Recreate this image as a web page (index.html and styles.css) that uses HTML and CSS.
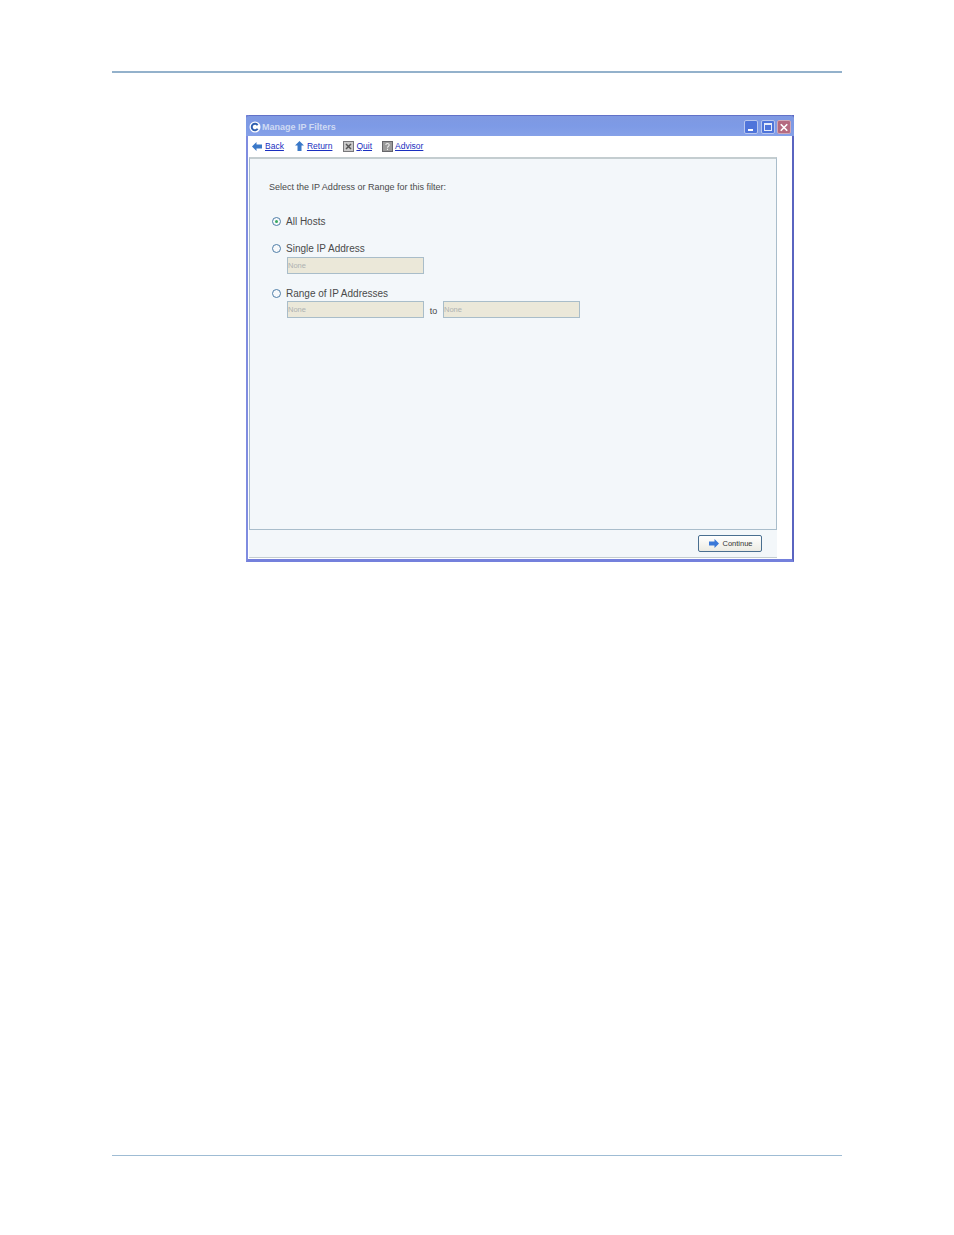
FILE: index.html
```html
<!DOCTYPE html>
<html lang="en">
<head>
  <meta charset="UTF-8">
  <title>Manage IP Filters</title>
  <link rel="stylesheet" href="styles.css">
</head>
<body>
  <div class="page">
    <div class="top-rule"></div>

    <div class="window">
      <div class="title-bar">
        <svg class="app-icon" width="12" height="12" viewBox="0 0 12 12">
          <circle cx="6" cy="6" r="5.5" fill="#fff"/>
          <path d="M8.6 4.2A3.2 3.2 0 1 0 8.6 7.8" fill="none" stroke="#2f5fb0" stroke-width="2"/>
        </svg>
        <span class="title-text">Manage IP Filters</span>
        <div class="window-buttons">
          <div class="win-btn win-min"><span class="min-mark"></span></div>
          <div class="win-btn win-max"><span class="max-mark"></span></div>
          <div class="win-btn win-close">
            <svg width="13" height="13" viewBox="0 0 13 13">
              <path d="M3 3L10 10M10 3L3 10" stroke="#fff" stroke-width="1.8"/>
            </svg>
          </div>
        </div>
      </div>

      <div class="toolbar">
        <div class="tool tool-back">
          <svg width="10" height="9" viewBox="0 0 10 9"><path d="M0 4.5L4.5 0V2.5H10V6.5H4.5V9Z" fill="#3a78c8"/></svg>
          <a href="#">Back</a>
        </div>
        <div class="tool tool-return">
          <svg width="9" height="10" viewBox="0 0 9 10"><path d="M4.5 0L9 4.5H6.5V10H2.5V4.5H0Z" fill="#3a78c8"/></svg>
          <a href="#">Return</a>
        </div>
        <div class="tool tool-quit">
          <svg width="11" height="11" viewBox="0 0 11 11">
            <rect width="11" height="11" fill="#77777a"/>
            <rect x="1" y="1" width="9" height="9" fill="#c9c9c9"/>
            <path d="M3 3L8 8M8 3L3 8" stroke="#555" stroke-width="1.5"/>
          </svg>
          <a href="#">Quit</a>
        </div>
        <div class="tool tool-advisor">
          <svg width="11" height="11" viewBox="0 0 11 11">
            <rect width="11" height="11" fill="#66666a"/>
            <rect x="1" y="1" width="9" height="9" fill="#9a9a9a"/>
            <path d="M3.8 4C3.8 2 7.2 2 7.2 4C7.2 5.3 5.5 5.3 5.5 6.8M5.5 7.8V9" fill="none" stroke="#eee" stroke-width="1.1"/>
          </svg>
          <a href="#">Advisor</a>
        </div>
      </div>

      <div class="panel">
        <p class="prompt">Select the IP Address or Range for this filter:</p>

        <div class="option option-all">
          <span class="radio radio-on"></span>
          <span class="option-label">All Hosts</span>
        </div>

        <div class="option option-single">
          <span class="radio"></span>
          <span class="option-label">Single IP Address</span>
        </div>
        <div class="fields">
          <div class="field">None</div>
        </div>

        <div class="option option-range">
          <span class="radio"></span>
          <span class="option-label">Range of IP Addresses</span>
        </div>
        <div class="fields fields-range">
          <div class="field">None</div>
          <span class="to">to</span>
          <div class="field">None</div>
        </div>
      </div>

      <div class="footer">
        <button class="continue-btn" type="button">
          <svg width="10" height="9" viewBox="0 0 10 9"><path d="M10 4.5L5.5 0V2.5H0V6.5H5.5V9Z" fill="#3a78d8"/></svg>
          Continue
        </button>
      </div>
    </div>

    <div class="bottom-rule"></div>
  </div>
</body>
</html>
```

FILE: styles.css
```css
html, body {
  margin: 0;
  padding: 0;
  background-color: #fff;
}

body {
  font-family: "Liberation Sans", Arial, sans-serif;
}

.page {
  width: 730px;
  height: 1235px;
  margin-left: 112px;
  padding-top: 71px;
  box-sizing: border-box;
  display: flex;
  flex-direction: column;
}

.top-rule {
  height: 2px;
  background-color: #93b1cb;
}

.bottom-rule {
  height: 1px;
  margin-top: 593px;
  background-color: #9fbcd4;
}

.window {
  width: 548px;
  height: 447px;
  margin: 42px 0 0 134px;
  box-sizing: border-box;
  border: 2px solid #7f8ce0;
  border-top: 0;
  border-bottom-width: 3px;
  border-bottom-color: #7480dc;
  border-right-color: #5a64c0;
  background-color: #fff;
  display: flex;
  flex-direction: column;
}

.title-bar {
  height: 21px;
  margin: 0 -2px;
  padding: 2px 3px 0 3px;
  flex-shrink: 0;
  display: flex;
  align-items: center;
  background: linear-gradient(#7f99e2, #7d9ae6 50%, #86a1e8);
  border-top: 1px solid #6272c8;
  box-sizing: border-box;
  border-radius: 3px 3px 0 0;
}

.app-icon {
  margin-right: 1px;
}

.title-text {
  font-size: 9px;
  font-weight: bold;
  color: #cfdaf3;
}

.window-buttons {
  margin-left: auto;
  display: flex;
  gap: 2.5px;
}

.win-btn {
  width: 14px;
  height: 14px;
  box-sizing: border-box;
  border: 1px solid #b8c6ee;
  border-radius: 2px;
  position: relative;
  display: flex;
  align-items: center;
  justify-content: center;
}

.win-min, .win-max {
  background-color: #4f74da;
}

.win-close {
  background-color: #b56a80;
  border-color: #cfa9b8;
}

.min-mark {
  position: absolute;
  left: 3px;
  bottom: 2px;
  width: 5px;
  height: 2px;
  background-color: #fff;
}

.max-mark {
  width: 8px;
  height: 8px;
  box-sizing: border-box;
  border: 1px solid #e6ecfa;
  border-top-width: 2px;
}

.toolbar {
  height: 20px;
  flex-shrink: 0;
  display: flex;
  align-items: center;
  padding-left: 4px;
  font-size: 8.5px;
}

.toolbar a {
  color: #1a2fc0;
  text-decoration: underline;
}

.tool {
  display: flex;
  align-items: center;
  gap: 3px;
}

.tool-back {
  margin-right: 11px;
}

.tool-return {
  margin-right: 11px;
}

.tool-quit {
  margin-right: 10px;
}

.tool-quit svg {
  margin-right: -1px;
}

.tool-advisor {
  gap: 2px;
}

.panel {
  height: 373px;
  width: 528px;
  margin: 1px 0 0 1px;
  flex-shrink: 0;
  box-sizing: border-box;
  border: 1px solid #a9bdcb;
  border-top: 2px solid #c4cdd0;
  background-color: #f3f7fa;
  padding: 22px 0 0 19px;
  font-size: 10px;
  color: #4a4a4a;
}

.prompt {
  margin: 0 0 22px;
  font-size: 9px;
  line-height: 12px;
}

.option {
  display: flex;
  align-items: center;
  height: 13px;
  padding-left: 3px;
}

.option-single {
  margin-top: 14px;
}

.option-range {
  margin-top: 13px;
}

.radio {
  width: 9px;
  height: 9px;
  box-sizing: border-box;
  margin-right: 5px;
  border: 1px solid #4f7ea8;
  border-radius: 50%;
  background-color: #f7f9fb;
  position: relative;
}

.radio-on::after {
  content: "";
  position: absolute;
  left: 2px;
  top: 2px;
  width: 3px;
  height: 3px;
  border-radius: 50%;
  background-color: #38a860;
}

.option-label {
  font-size: 10px;
}

.fields {
  display: flex;
  align-items: center;
  margin: 2px 0 0 18px;
}

.fields-range {
  margin-top: 1px;
}

.field {
  width: 137px;
  height: 17px;
  box-sizing: border-box;
  padding-left: 0;
  border: 1px solid #a9bdc9;
  background-color: #ebe8d9;
  font-size: 7.5px;
  line-height: 15px;
  color: #aeb2b2;
}

.to {
  width: 19px;
  text-align: center;
  font-size: 9px;
  padding-top: 2px;
}

.footer {
  flex: 1;
  width: 528px;
  margin: 0 0 1px 1px;
  box-sizing: border-box;
  background-color: #f3f7fa;
  border-bottom: 1px solid #c4cdd0;
  display: flex;
  justify-content: flex-end;
  align-items: flex-start;
  padding: 5px 15px 0 0;
}

.continue-btn {
  width: 64px;
  height: 17px;
  padding: 0 0 0 2px;
  display: flex;
  align-items: center;
  justify-content: center;
  gap: 3px;
  border: 1px solid #4a6f90;
  border-radius: 2px;
  background: linear-gradient(#fff, #ecebe3);
  font-family: inherit;
  font-size: 7.5px;
  color: #333;
}
```
